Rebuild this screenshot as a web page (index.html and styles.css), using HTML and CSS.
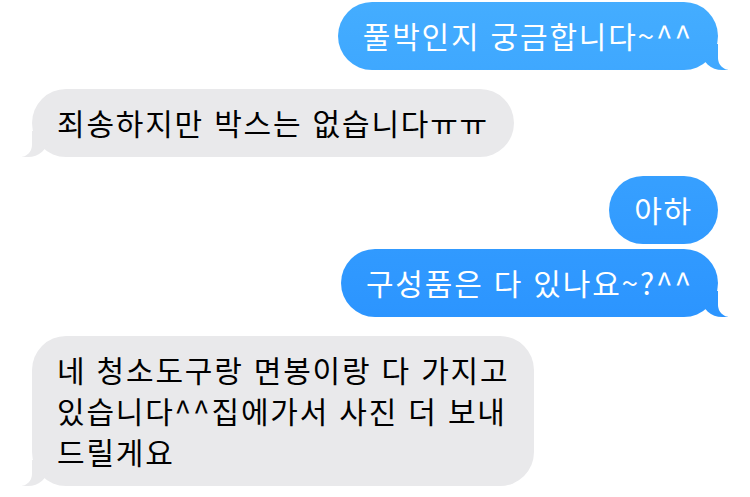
FILE: index.html
```html
<!DOCTYPE html>
<html lang="ko">
<head>
  <meta charset="UTF-8">
  <title>Messages</title>
  <link rel="stylesheet" href="styles.css">
</head>
<body>
  <div class="thread">
    <p class="msg me tail">풀박인지 궁금합니다~^^</p>
    <p class="msg them tail">죄송하지만 박스는 없습니다ㅠㅠ</p>
    <p class="msg me">아하</p>
    <p class="msg me tail same">구성품은 다 있나요~?^^</p>
    <p class="msg them tail">네 청소도구랑 면봉이랑 다 가지고<br>있습니다^^집에가서 사진 더 보내<br>드릴게요</p>
  </div>
</body>
</html>
```

FILE: styles.css
```css
* {
  box-sizing: border-box;
}

body {
  margin: 0;
  background: #fff;
  font-family: "Noto Sans CJK KR", "Noto Sans", sans-serif;
}

.thread {
  display: flex;
  flex-direction: column;
  padding: 2px 32px 0;
}

.msg {
  position: relative;
  margin: 19px 0 0;
  padding: 13px 25px 14px;
  font-size: 30px;
  line-height: 41px;
  letter-spacing: 1.8px;
  border-radius: 34px;
}

.msg:first-child {
  margin-top: 0;
}

.msg.same {
  margin-top: 5px;
}

.me {
  align-self: flex-end;
  color: #fff;
  background: linear-gradient(#44adff, #1e87ff) fixed;
}

.them {
  align-self: flex-start;
  color: #000;
  background: #e9e9eb;
}

/* bubble tails */
.tail::before,
.tail::after {
  content: "";
  position: absolute;
  bottom: 0;
  height: 26px;
}

.me.tail::before {
  right: -10px;
  width: 26px;
  background: linear-gradient(#44adff, #1e87ff) fixed;
  border-bottom-left-radius: 20px 18px;
}

.me.tail::after {
  right: -36px;
  width: 36px;
  background: #fff;
  border-bottom-left-radius: 12px;
}

.them.tail::before {
  left: -10px;
  width: 26px;
  background: #e9e9eb;
  border-bottom-right-radius: 20px 18px;
}

.them.tail::after {
  left: -36px;
  width: 36px;
  background: #fff;
  border-bottom-right-radius: 12px;
}
```
